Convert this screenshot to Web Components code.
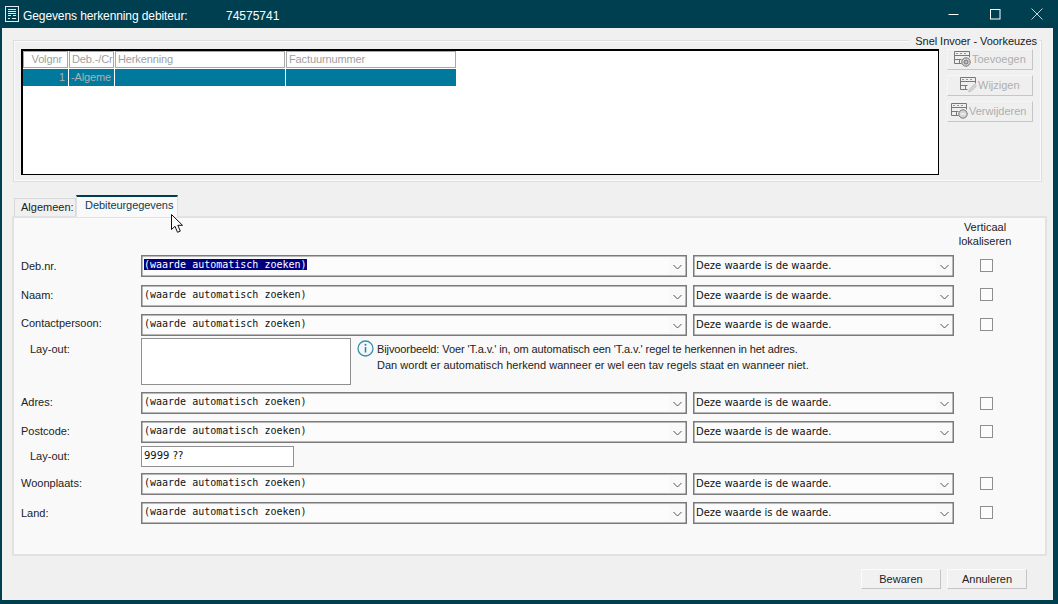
<!DOCTYPE html>
<html><head><meta charset="utf-8"><title>Gegevens herkenning debiteur</title>
<style>html,body{margin:0;padding:0;background:#003f50;height:604px;overflow:hidden}body{font:11px "Liberation Sans",sans-serif;color:#222}</style>
</head><body>
<app-window>
  <title-bar></title-bar>
  <client-area>
    <group-box title="Snel Invoer - Voorkeuzes">
      <data-grid></data-grid>
      <tool-stack>
        <tool-button kind="add" pad="6">Toevoegen</tool-button>
        <tool-button kind="edit" pad="12">Wijzigen</tool-button>
        <tool-button kind="del" pad="3">Verwijderen</tool-button>
      </tool-stack>
    </group-box>
    <tab-strip></tab-strip>
    <tab-panel>
      <form-header>Verticaal<br>lokaliseren</form-header>
      <form-row label="Deb.nr." selected style="--gap:0px;--lab:0px"></form-row>
      <form-row label="Naam:" style="--gap:8px;--cb:3px;--lab:-1px"></form-row>
      <form-row label="Contactpersoon:" style="--gap:7px;--cb:4px;--lab:-2px"></form-row>
      <layout-row label="Lay-out:" style="--gap:2px;--lt:4px">
        <multi-box></multi-box>
        <info-note><span style="letter-spacing:-.1px">Bijvoorbeeld: Voer 'T.a.v.' in, om automatisch een 'T.a.v.' regel te herkennen in het adres.</span><br><span style="letter-spacing:.03px">Dan wordt er automatisch herkend wanneer er wel een tav regels staat en wanneer niet.</span></info-note>
      </layout-row>
      <form-row label="Adres:" style="--gap:7px;--cb:5px;--lab:-1px"></form-row>
      <form-row label="Postcode:" style="--gap:7px;--cb:4px;--lab:-1px"></form-row>
      <layout-row label="Lay-out:" style="--gap:3px;--lt:3px"><text-box>9999 ??</text-box></layout-row>
      <form-row label="Woonplaats:" style="--gap:6px;--cb:4px;--lab:-1px"></form-row>
      <form-row label="Land:" style="--gap:7px;--cb:4px;--lab:0px"></form-row>
    </tab-panel>
    <dialog-footer>
      <push-button>Bewaren</push-button>
      <push-button>Annuleren</push-button>
    </dialog-footer>
  </client-area>
  <mouse-cursor></mouse-cursor>
</app-window>
<script>
function el(name, css, html){
  customElements.define(name, class extends HTMLElement{
    connectedCallback(){
      if(this.shadowRoot) return;
      const r=this.attachShadow({mode:'open'});
      const a=k=>this.getAttribute(k)||'';
      r.innerHTML='<style>'+css+'</style>'+(typeof html==='function'?html(a,this):html);
    }
  });
}
const UI='"Liberation Sans",sans-serif';
el('app-window',':host{display:flex;flex-direction:column;width:1058px;height:604px;position:relative;background:#003f50}','<slot></slot>');
el('title-bar',`:host{display:flex;align-items:center;height:28px;color:#fff;font:12px ${UI};flex:none}
 svg{flex:none;display:block}.ic{margin:0 3px 0 5px}.t{width:203px;white-space:nowrap;letter-spacing:-.1px;padding-top:3px}.n{flex:1;padding-top:3px}.c{width:42px;display:flex;justify-content:center}`,
 `<svg class="ic" width="15" height="16" viewBox="0 0 15 16" fill="none" stroke="#e4ecef"><rect x=".5" y=".5" width="13" height="15"/><path d="M3 3.500h8M3 5.500h8M3 7.500h8M3 9.500h3M8 9.500h3M3 12.500h2M7 12.500h4"/></svg>
 <span class="t">Gegevens herkenning debiteur:</span><span class="n">74575741</span>
 <span class="c"><svg width="11" height="11" viewBox="0 0 11 11"><path d="M.5 5.500h10" stroke="#fff" fill="none"/></svg></span>
 <span class="c"><svg width="11" height="11" viewBox="0 0 11 11"><rect x=".5" y=".5" width="9.500" height="9.500" stroke="#fff" fill="none"/></svg></span>
 <span class="c"><svg width="12" height="12" viewBox="0 0 12 12"><path d="M.5 .5l11 11M11.500 .5l-11 11" stroke="#c8d4d8" fill="none"/></svg></span>`);
el('client-area',`:host{display:flex;flex-direction:column;flex:none;box-sizing:border-box;width:1051px;height:572px;margin-left:2px;background:#f0f0f0;padding-top:12px}`,'<slot></slot>');
el('group-box',`:host{display:flex;gap:8px;position:relative;box-sizing:border-box;width:1029px;height:142px;margin-left:11px;padding:8px 0 0 7px;border:1px solid #dedede;box-shadow:inset 0 0 0 1px #fbfbfb;flex:none;background:#f0f0f0}
 .l{position:absolute;right:2px;top:-7px;background:#f0f0f0;padding:0 2px 0 6px;color:#1a1a1a;font:11px/14px ${UI};white-space:nowrap;letter-spacing:-.05px}`,
 a=>`<span class="l">${a('title')}</span><slot></slot>`);
el('data-grid',`:host{display:block;box-sizing:border-box;width:918px;height:126px;border:solid #000;border-width:2px 1px 1px 2px;background:#fff;font:11px ${UI};flex:none;letter-spacing:-.12px}
 .g{display:grid;grid-template-columns:45px 45px 170px 170px;grid-auto-rows:17px;gap:1px 1px}
 .h{border:1px solid #a8a8a8;box-sizing:border-box;color:#a0a0a0;line-height:15px;padding:0 2px;white-space:nowrap;overflow:hidden}
 .d{background:#00799c;color:#b0b0b0;line-height:17px;padding:0 2px;white-space:nowrap;overflow:hidden}.r{text-align:right}.h.r{padding-right:5px}.d.r{padding-right:3px}`,
 `<div class="g"><div class="h r">Volgnr</div><div class="h">Deb.-/Cr</div><div class="h">Herkenning</div><div class="h">Factuurnummer</div>
 <div class="d r">1</div><div class="d">-Algeme</div><div class="d"></div><div class="d"></div></div>`);
el('tool-stack',':host{display:flex;flex-direction:column;gap:5px;width:86px;flex:none}','<slot></slot>');
const badge={
 add:'<circle cx="12" cy="12" r="4.200" fill="#d4d4d4"/><circle cx="12" cy="12" r="2" fill="#bcbcbc"/>',
 edit:'<path d="M8.500 16l1-3 5-5 2 2-5 5z" fill="#d4d4d4" stroke="#bcbcbc" stroke-width=".7"/>',
 del:'<circle cx="12" cy="12" r="4.200" fill="#d4d4d4"/><path d="M9.500 12h5" stroke="#f4f4f4" stroke-width="1.300"/>'};
el('tool-button',`:host{display:flex;align-items:center;box-sizing:border-box;height:21px;padding-bottom:2px;background:#efefef;border:1px solid;border-color:#f6f6f6 #c6c6c6 #c6c6c6 #f6f6f6;color:#aeaeae;font:11px ${UI};white-space:nowrap}
 svg{flex:none;display:block}`,
 a=>`<svg style="margin-left:${a('pad')}px" width="18" height="17" viewBox="0 0 18 17" fill="none" stroke="#787878"><path d="M.5 1.500h15M.5 5.500h15M.5 1.500v12M15.500 1.500v6M.5 9.500h7M.5 13.500h7M5.500 9.500v4"/><path d="M2 3.500h2M6 3.500h2M10 3.500h2" stroke="#989898"/>${badge[a('kind')]}</svg><slot></slot>`);
el('tab-strip',`:host{display:flex;align-items:flex-end;height:21px;margin:13px 0 0 12px;position:relative;z-index:1;font:11px ${UI};flex:none}
 .a{box-sizing:border-box;width:62px;height:18px;border:1px solid #d9d9d9;border-bottom:0;background:#f0f0f0;padding:2px 0 0 6px;color:#222}
 .b{box-sizing:border-box;width:102px;height:22px;margin-bottom:-1px;border:1px solid #e0e0e0;border-top:2px solid #003f50;border-bottom:0;background:#f9f9f9;padding:2px 0 0 8px;color:#0e3c50;letter-spacing:-.06px}`,
 `<div class="a">Algemeen:</div><div class="b">Debiteurgegevens</div>`);
el('tab-panel',`:host{display:block;box-sizing:border-box;width:1035px;height:340px;margin-left:10px;border:2px solid #e2e2e2;background:#f9f9f9;flex:none}`,'<slot></slot>');
el('form-header',`:host{display:block;box-sizing:border-box;height:37px;padding:2px 22px 0 0;text-align:right;font:11px/14px ${UI};color:#222}
 div{display:inline-block;width:76px;text-align:center}`,'<div><slot></slot></div>');
const chev='<svg width="9" height="6" viewBox="0 0 9 6" fill="none" stroke="#555"><path d="M.5 1l4 4 4-4"/></svg>';
el('combo-box',`:host{display:flex;align-items:center;box-sizing:border-box;height:22px;border:1px solid #7a7a7a;box-shadow:inset 0 0 0 .5px #7a7a7a;background:#f9f9f9;flex:none}
 .v{flex:1;height:16px;margin-left:2px;background:#fcfcfc;line-height:var(--lh,15px);white-space:pre;color:#111}
 .c{width:17px;display:flex;justify-content:center;flex:none;padding-top:2px}
 mark{background:#00007f;color:#fff}`,
 (a,t)=>`<div class="v">${t.hasAttribute('selected')?'<mark><slot></slot></mark>':'<slot></slot>'}</div><div class="c">${chev}</div>`);
el('check-box',`:host{display:block;box-sizing:border-box;width:13px;height:13px;border:1px solid #8f8f8f;background:#fcfcfc;flex:none}`,'');
el('form-row',`:host{display:flex;align-items:flex-start;margin-top:var(--gap,0);height:22px;font:11px ${UI}}
 .l{width:120px;margin-left:7px;padding-top:calc(4px + var(--lab,0px));line-height:14px;color:#222;flex:none;white-space:nowrap}
 .m{font:10px "DejaVu Sans Mono",monospace;width:546px;--lh:13px}.d{font:10px "DejaVu Sans",sans-serif;width:261px;margin-left:6px}
 .x{margin:var(--cb,4px) 0 0 26px}`,
 (a,t)=>`<div class="l">${a('label')}</div>
 <combo-box class="m"${t.hasAttribute('selected')?' selected':''}>(waarde automatisch zoeken)</combo-box>
 <combo-box class="d">Deze waarde is de waarde.</combo-box><check-box class="x"></check-box>`);
el('layout-row',`:host{display:flex;align-items:flex-start;margin-top:var(--gap,0);font:11px ${UI}}
 .l{width:111px;margin-left:16px;padding-top:var(--lt,3px);line-height:14px;color:#222;flex:none}`,
 a=>`<div class="l">${a('label')}</div><slot></slot>`);
el('multi-box',`:host{display:block;box-sizing:border-box;width:210px;height:47px;border:1px solid #8f8f8f;background:#fff;flex:none}`,'');
el('text-box',`:host{display:block;box-sizing:border-box;width:153px;height:21px;border:1px solid #8f8f8f;background:#fff;flex:none;font:10px/18px "DejaVu Sans",sans-serif;padding-left:2px;color:#111}`,'<slot></slot>');
el('info-note',`:host{display:flex;gap:3px;margin-left:6px;font:11px/16px ${UI};color:#222;white-space:nowrap}
 svg{flex:none;display:block;margin-top:2px}`,
 `<svg width="17" height="17" viewBox="0 0 17 17"><circle cx="8.500" cy="8.500" r="7.500" fill="#f4fafc" stroke="#3a8fb0" stroke-width="1.300"/><path d="M8.500 7v5.500" stroke="#2f7fa2" stroke-width="1.500"/><circle cx="8.500" cy="4.700" r="1" fill="#2f7fa2"/></svg><div style="margin-top:3px"><slot></slot></div>`);
el('dialog-footer',`:host{display:flex;justify-content:flex-end;gap:6px;padding:13px 26px 0 0}`,'<slot></slot>');
el('push-button',`:host{display:flex;align-items:center;justify-content:center;box-sizing:border-box;width:80px;height:20px;background:#f1f1f1;border:1px solid;border-color:#fbfbfb #c4c4c4 #c4c4c4 #fbfbfb;font:11px ${UI};color:#222}`,'<slot></slot>');
el('mouse-cursor',`:host{position:absolute;left:171px;top:214px;width:14px;height:20px;z-index:5}svg{display:block}`,
 `<svg width="14" height="20" viewBox="0 0 14 20"><path d="M.5 .5v15l3.500-3.200 2.500 6 2.800-1.200-2.500-5.800h4.700z" fill="#fdfdfd" stroke="#111"/></svg>`);
</script>
</body></html>
